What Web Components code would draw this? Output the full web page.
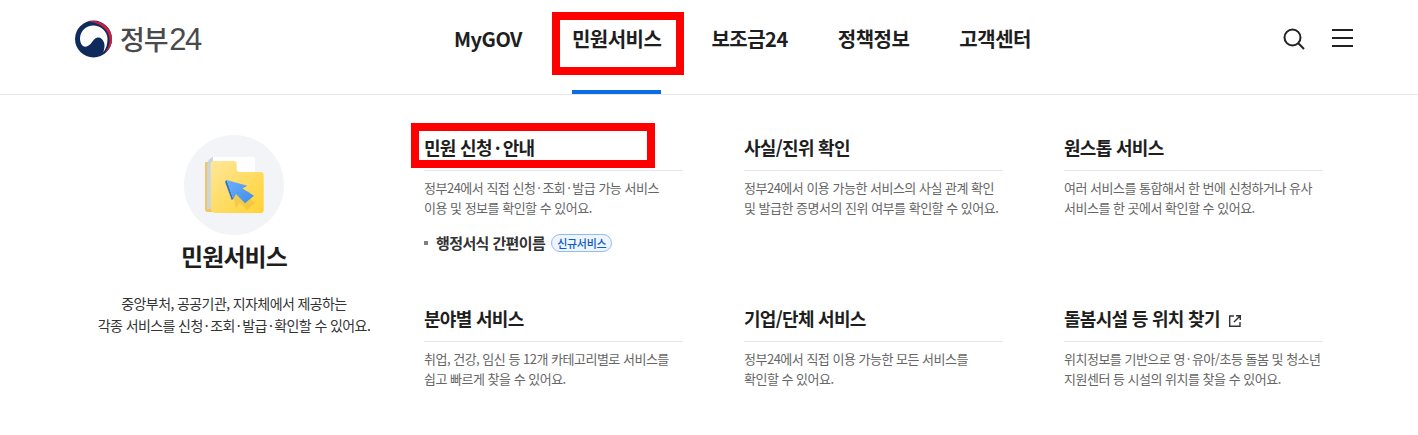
<!DOCTYPE html>
<html lang="ko">
<head>
<meta charset="utf-8">
<title>정부24</title>
<style>
  html, body { margin: 0; background: #fff; }
  body { font-family: "Noto Sans CJK KR", "Noto Sans", sans-serif; color: #1e1e1e; overflow: hidden; }
  /* 가운뎃점 양옆 여백 */
  .md { margin: 0 .15em; }
</style>
</head>
<body>
<gov-header>
  <nav-item>MyGOV</nav-item>
  <nav-item active marked>민원서비스</nav-item>
  <nav-item>보조금24</nav-item>
  <nav-item>정책정보</nav-item>
  <nav-item>고객센터</nav-item>
</gov-header>
<mega-menu>
  <menu-intro slot="intro" heading="민원서비스">중앙부처, 공공기관, 지자체에서 제공하는<br>각종 서비스를 신청<span class="md">·</span>조회<span class="md">·</span>발급<span class="md">·</span>확인할 수 있어요.</menu-intro>
  <service-card heading="민원 신청·안내" marked>
    정부24에서 직접 신청<span class="md">·</span>조회<span class="md">·</span>발급 가능 서비스<br>이용 및 정보를 확인할 수 있어요.
    <sub-link slot="links" badge="신규서비스">행정서식 간편이름</sub-link>
  </service-card>
  <service-card heading="사실/진위 확인">정부24에서 이용 가능한 서비스의 사실 관계 확인<br>및 발급한 증명서의 진위 여부를 확인할 수 있어요.</service-card>
  <service-card heading="원스톱 서비스">여러 서비스를 통합해서 한 번에 신청하거나 유사<br>서비스를 한 곳에서 확인할 수 있어요.</service-card>
  <service-card heading="분야별 서비스">취업, 건강, 임신 등 12개 카테고리별로 서비스를<br>쉽고 빠르게 찾을 수 있어요.</service-card>
  <service-card heading="기업/단체 서비스">정부24에서 직접 이용 가능한 모든 서비스를<br>확인할 수 있어요.</service-card>
  <service-card heading="돌봄시설 등 위치 찾기" external>위치정보를 기반으로 영<span class="md">·</span>유아/초등 돌봄 및 청소년<br>지원센터 등 시설의 위치를 찾을 수 있어요.</service-card>
</mega-menu>

<script>
// 상단 헤더: 로고, 가운데 메뉴, 오른쪽 아이콘
class GovHeader extends HTMLElement {
  constructor() {
    super();
    this.attachShadow({ mode: 'open' });
    this.shadowRoot.innerHTML = `
      <style>
        :host { display: flex; align-items: stretch; height: 94px; box-sizing: content-box; border-bottom: 1px solid #e4e6ee; position: relative; }
        .logo { flex: 0 0 auto; display: flex; align-items: center; gap: 7px; width: 454px; padding: 0 0 16px 74px; box-sizing: border-box; }
        .logo span { font-size: 27px; line-height: 36px; color: #4a4a4c; letter-spacing: -1.2px; font-weight: 500; }
        .logo b { font-family: "Liberation Sans", sans-serif; font-weight: 400; font-size: 31px; letter-spacing: -1.5px; margin-left: 2px; }
        nav { flex: 1; display: flex; justify-content: flex-start; gap: 50px; }
        .tools { display: flex; align-items: flex-start; gap: 26px; padding: 27px 65px 0 0; }
        svg { display: block; }
      </style>
      <div class="logo">
        <svg width="39" height="38" viewBox="0 0 38 38" aria-hidden="true">
          <circle cx="19" cy="19" r="18.500" fill="#0f2b5b"/>
          <path d="M14 1.500C26 -1 37.500 7 37.500 19 37.500 25 34.500 30.500 29.500 34 33.500 29 35.500 24 35 19 34.500 10 26 2.500 14 1.500z" fill="#cd1f3c"/>
          <path d="M5.500 18C6 10.500 12 5.500 18.500 5.500 26.500 5.500 33 11.500 33 19 33 24.500 31.500 29 28.800 32.200 30 28.500 30.500 25.500 29.500 22.500 28 18.500 25.500 17 23 17.500 20 18 18.500 21 16.500 23.500 14.500 26 11.500 27 9.500 26.500 7 25.500 5.500 22 5.500 18z" fill="#fff"/>
        </svg>
        <span>정부<b>24</b></span>
      </div>
      <nav><slot></slot></nav>
      <div class="tools">
        <svg width="24" height="24" viewBox="0 0 24 24" fill="none" stroke="#222" stroke-width="2" aria-label="검색"><circle cx="10.500" cy="10.500" r="8"/><path d="M16.300 16.300l5.700 5.700"/></svg>
        <svg width="21" height="20" viewBox="0 0 21 20" fill="#222" aria-label="전체메뉴" style="margin-top:2px"><rect y="0" width="21" height="2"/><rect y="8" width="21" height="2"/><rect y="16" width="21" height="2"/></svg>
      </div>`;
  }
}

class NavItem extends HTMLElement {
  constructor() {
    super();
    this.attachShadow({ mode: 'open' });
    this.shadowRoot.innerHTML = `
      <style>
        :host { display: block; position: relative; height: 94px; box-sizing: border-box; padding-top: 24px; font-size: 20px; line-height: 30px; font-weight: 700; letter-spacing: -0.5px; color: #1e1e1e; white-space: nowrap; }
        :host([active])::before { content: ""; position: absolute; left: 0; right: 0; bottom: 0; height: 4px; background: #0b6ddf; }
        :host([marked])::after { content: ""; position: absolute; left: -20px; right: -23px; top: 12px; height: 63px; box-sizing: border-box; border: 8px solid #ff0000; }
      </style>
      <slot></slot>`;
  }
}

class MegaMenu extends HTMLElement {
  constructor() {
    super();
    this.attachShadow({ mode: 'open' });
    this.shadowRoot.innerHTML = `
      <style>
        :host { display: flex; padding: 40px 95px 0 84px; }
        .intro { flex: 0 0 340px; }
        .grid { flex: 1; display: grid; grid-template-columns: repeat(3, 259px); column-gap: 61px; grid-template-rows: 171px auto; }
      </style>
      <div class="intro"><slot name="intro"></slot></div>
      <div class="grid"><slot></slot></div>`;
  }
}

class MenuIntro extends HTMLElement {
  constructor() {
    super();
    this.attachShadow({ mode: 'open' });
    this.shadowRoot.innerHTML = `
      <style>
        :host { display: flex; flex-direction: column; align-items: center; width: 300px; text-align: center; }
        .badge { width: 100px; height: 100px; border-radius: 50%; background: #f3f4f7; display: flex; align-items: center; justify-content: center; }
        h2 { margin: 3px 0 0; font-size: 24px; line-height: 36px; font-weight: 700; letter-spacing: -0.9px; color: #1e1e1e; }
        p { margin: 18px 0 0; font-size: 14px; line-height: 22px; letter-spacing: -0.6px; color: #333; white-space: nowrap; }
        svg { display: block; }
      </style>
      <div class="badge">
        <svg width="64" height="60" viewBox="0 0 64 60" aria-hidden="true">
          <defs>
            <linearGradient id="fold" x1="0" y1="0" x2="1" y2="1"><stop offset="0" stop-color="#ffe79a"/><stop offset="1" stop-color="#ffd233"/></linearGradient>
            <linearGradient id="arr" x1="0" y1="0" x2="1" y2="1"><stop offset="0" stop-color="#6db0fa"/><stop offset="1" stop-color="#3f8cec"/></linearGradient>
          </defs>
          <path d="M3 7h8v50H6a3 3 0 0 1-3-3z" fill="#f2c464"/>
          <path d="M7 5a3 3 0 0 1 3-3h41a2 2 0 0 1 2 2v16H7z" fill="#fff"/>
          <path d="M5 12c0-5 2-9 6-10v52H5z" fill="#c9d6df"/>
          <path d="M8.700 9a3 3 0 0 1 3-3h20a3 3 0 0 1 3 3v5a3 3 0 0 0 3 3h21a3 3 0 0 1 3 3v35a3 3 0 0 1-3 3H14a5.300 5.300 0 0 1-5.300-5.300z" fill="url(#fold)"/>
          <path d="M29 32l20 5-5 4 9 7-8 7-7-8-4 6z" fill="#d8a92c" opacity=".3"/>
          <path d="M23 26.700l1.700-1.700 6.600 19-1.600 1z" fill="#2f74d0"/>
          <path d="M24.700 25l20.600 5.700-4.800 2.800L52 40.700 43 48.300 34 39 31.300 44z" fill="url(#arr)"/>
        </svg>
      </div>
      <h2>${this.getAttribute('heading')}</h2>
      <p><slot></slot></p>`;
  }
}

class ServiceCard extends HTMLElement {
  constructor() {
    super();
    this.attachShadow({ mode: 'open' });
    const ext = this.hasAttribute('external')
      ? `<svg width="12" height="12" viewBox="0 0 12 12" fill="none" stroke="#333" stroke-width="1.400" aria-hidden="true"><path d="M5 1H.7v10.300H11V7M7 .7h4.300V5M11.300.7L5 7"/></svg>`
      : '';
    const title = this.getAttribute('heading').replace(/·/g, '<span class="md">·</span>');
    this.shadowRoot.innerHTML = `
      <style>
        :host { display: block; position: relative; }
        .head { display: flex; align-items: center; gap: 9px; height: 35px; border-bottom: 1px solid #e4e6ee; }
        h3 { margin: 0 0 12px; font-size: 18px; line-height: 26px; font-weight: 700; letter-spacing: -0.7px; color: #1e1e1e; white-space: nowrap; }
        .md { margin: 0 .16em; }
        svg { margin-bottom: 6px; }
        p { margin: 7px 0 0; font-size: 13px; line-height: 20px; letter-spacing: -0.5px; color: #666; white-space: nowrap; }
        .links { margin-top: 14px; }
        :host([marked])::after { content: ""; position: absolute; left: -13px; top: -12px; width: 244px; height: 45px; box-sizing: border-box; border: 8px solid #ff0000; }
      </style>
      <div class="head"><h3>${title}</h3>${ext}</div>
      <p><slot></slot></p>
      <div class="links"><slot name="links"></slot></div>`;
  }
}

class SubLink extends HTMLElement {
  constructor() {
    super();
    this.attachShadow({ mode: 'open' });
    this.shadowRoot.innerHTML = `
      <style>
        :host { display: flex; align-items: center; font-size: 15px; line-height: 22px; font-weight: 700; letter-spacing: -0.6px; color: #333; white-space: nowrap; }
        .dot { width: 4px; height: 4px; background: #808080; margin-right: 8px; }
        .tag { margin-left: 6px; height: 16px; line-height: 16px; padding: 0 5px; border: 1px solid #8ebcf3; border-radius: 10px; background: #eef5fe; font-size: 11px; font-weight: 500; letter-spacing: -0.3px; color: #0b5cc4; }
      </style>
      <span class="dot"></span><slot></slot><span class="tag">${this.getAttribute('badge')}</span>`;
  }
}

customElements.define('gov-header', GovHeader);
customElements.define('nav-item', NavItem);
customElements.define('mega-menu', MegaMenu);
customElements.define('menu-intro', MenuIntro);
customElements.define('service-card', ServiceCard);
customElements.define('sub-link', SubLink);
</script>
</body>
</html>
